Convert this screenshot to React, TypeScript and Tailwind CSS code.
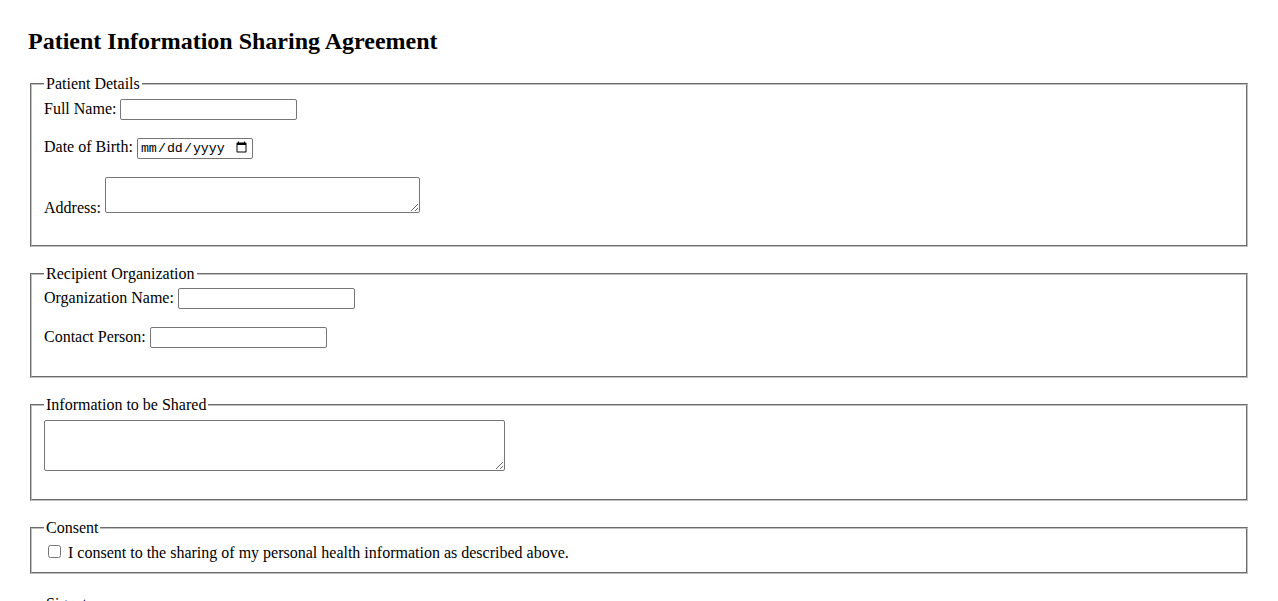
import * as React from "react";

// Plain browser-default form look: Times-like serif, grooved fieldsets, native inputs.
function Section({
  legend,
  gap = "mb-[18px]",
  children,
}: {
  legend: string;
  gap?: string;
  children: React.ReactNode;
}) {
  return (
    <fieldset
      className={`mx-[2px] ${gap} border-2 border-[#c0c0c0] [border-style:groove] px-[12px] pt-[5.6px] pb-[10px]`}
    >
      <legend className="px-[2px]">{legend}</legend>
      {children}
    </fieldset>
  );
}

const boxCls =
  "h-[21px] rounded-[2px] border border-[#767676] bg-white px-[2px] align-baseline text-[13.33px]";
const textCls = `${boxCls} w-[177px] font-['Liberation_Sans',Arial,sans-serif]`;
const dateCls = `${boxCls} w-[116px] font-['Liberation_Mono',monospace]`;

const areaCls =
  "rounded-[2px] border border-[#767676] bg-white p-[2px] font-['Liberation_Mono',monospace] text-[13.33px] leading-[15px]";

export default function App() {
  return (
    <div className="min-h-screen bg-white px-[28px] pt-[28px] font-['Liberation_Serif','Times_New_Roman',serif] text-[16px] leading-[normal] text-black">
      <h2 className="mb-[20px] text-[24px] font-bold leading-[normal]">
        Patient Information Sharing Agreement
      </h2>

      <form>
        <Section legend="Patient Details">
          <label htmlFor="fullName">Full Name:</label>{" "}
          <input id="fullName" type="text" className={textCls} />
          <br />
          <br />
          <label htmlFor="dob">Date of Birth:</label>{" "}
          <input id="dob" type="date" className={dateCls} />
          <br />
          <br />
          <label htmlFor="address">Address:</label>{" "}
          <textarea
            id="address"
            rows={2}
            className={`${areaCls} h-[36px] w-[315px] align-baseline`}
          />
          <br />
          <br />
        </Section>

        <Section legend="Recipient Organization">
          <label htmlFor="orgName">Organization Name:</label>{" "}
          <input id="orgName" type="text" className={textCls} />
          <br />
          <br />
          <label htmlFor="contact">Contact Person:</label>{" "}
          <input id="contact" type="text" className={textCls} />
          <br />
          <br />
        </Section>

        <Section legend="Information to be Shared">
          <textarea
            id="info"
            rows={3}
            className={`${areaCls} h-[51px] w-[461px] align-bottom`}
          />
          <br />
          <br />
        </Section>

        <Section legend="Consent" gap="mb-[21px]">
          <input
            id="consent"
            type="checkbox"
            className="mt-[3px] mr-[3px] mb-[3px] ml-[4px] h-[13px] w-[13px] align-baseline"
          />{" "}
          <label htmlFor="consent">
            I consent to the sharing of my personal health information as described above.
          </label>
        </Section>

        <Section legend="Signature">
          <label htmlFor="sig">Patient Signature:</label>{" "}
          <input id="sig" type="text" className={textCls} />
          <br />
          <br />
          <label htmlFor="sigDate">Date:</label>{" "}
          <input id="sigDate" type="date" className={dateCls} />
          <br />
          <br />
        </Section>
      </form>
    </div>
  );
}
